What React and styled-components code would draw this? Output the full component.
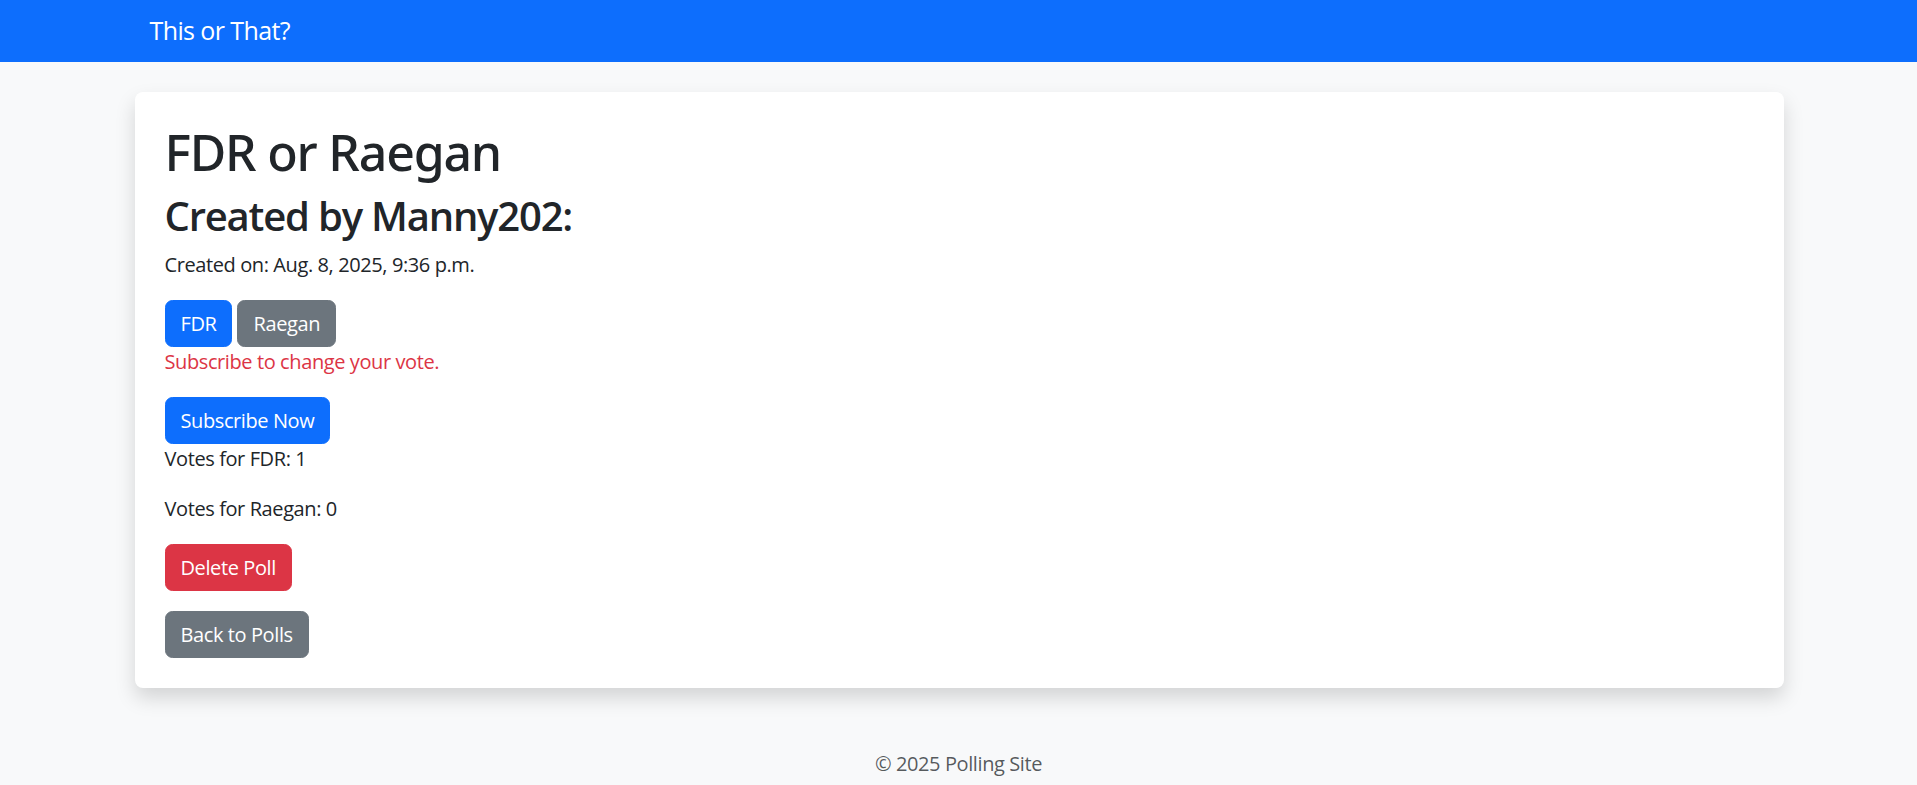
import styled, { createGlobalStyle } from "styled-components";

const GlobalStyle = createGlobalStyle`
  * {
    box-sizing: border-box;
  }
  body {
    margin: 0;
    background: #f8f9fa;
    color: #212529;
    font-family: "Open Sans", "Noto Sans", sans-serif;
    font-size: 20px;
    line-height: 1.5;
    letter-spacing: -0.4px;
  }
`;

const Navbar = styled.nav`
  background: #0d6efd;
  height: 62px;
  display: flex;
  align-items: center;
`;

const Container = styled.div`
  width: 1650px;
  margin: 0 auto;
  padding: 0 16px;
`;

const Brand = styled.a`
  color: #fff;
  font-size: 25px;
  line-height: 37.5px;
  letter-spacing: -0.6px;
  text-decoration: none;
`;

const Main = styled.main`
  width: 1650px;
  margin: 30px auto 0;
  padding-left: 1px;
`;

const Card = styled.div`
  background: #fff;
  border-radius: 8px;
  box-shadow: 0 10px 20px rgba(0, 0, 0, 0.15);
  padding: 30px;
`;

const Title = styled.h1`
  margin: 0 0 10px;
  font-family: "Noto Sans", "Open Sans", sans-serif;
  font-size: 50px;
  font-weight: 500;
  line-height: 1.2;
  letter-spacing: -1.2px;
`;

const Author = styled.h2`
  margin: 0 0 10px;
  font-size: 40px;
  font-weight: 600;
  line-height: 1.2;
  letter-spacing: -1.2px;
`;

const Text = styled.p`
  margin: 0 0 20px;
  color: ${(p) => (p.$danger ? "#dc3545" : "inherit")};
`;

const ButtonRow = styled.div`
  display: flex;
  gap: 5px;
`;

const colors = {
  primary: "#0d6efd",
  secondary: "#6c757d",
  danger: "#dc3545",
};

const Button = styled.button`
  display: inline-block;
  font-family: inherit;
  font-size: 20px;
  line-height: 30px;
  letter-spacing: inherit;
  padding: 7.5px 15px;
  border: 1.25px solid ${(p) => colors[p.$variant]};
  border-radius: 7.5px;
  background: ${(p) => colors[p.$variant]};
  color: #fff;
  cursor: pointer;
`;

const Stack = styled.div`
  display: flex;
  flex-direction: column;
  align-items: flex-start;
  gap: 20px;
`;

const Footer = styled.footer`
  text-align: center;
  color: rgba(33, 37, 41, 0.75);
  margin-top: 61px;
  line-height: 30px;
`;

export default function App() {
  return (
    <>
      <GlobalStyle />
      <Navbar>
        <Container>
          <Brand href="#">This or That?</Brand>
        </Container>
      </Navbar>
      <Main>
        <Card>
          <Title>FDR or Raegan</Title>
          <Author>Created by Manny202:</Author>
          <Text>Created on: Aug. 8, 2025, 9:36 p.m.</Text>
          <ButtonRow>
            <Button $variant="primary">FDR</Button>
            <Button $variant="secondary">Raegan</Button>
          </ButtonRow>
          <Text $danger>Subscribe to change your vote.</Text>
          <Button $variant="primary">Subscribe Now</Button>
          <Text>Votes for FDR: 1</Text>
          <Text>Votes for Raegan: 0</Text>
          <Stack>
            <Button $variant="danger">Delete Poll</Button>
            <Button $variant="secondary">Back to Polls</Button>
          </Stack>
        </Card>
      </Main>
      <Footer>© 2025 Polling Site</Footer>
    </>
  );
}
